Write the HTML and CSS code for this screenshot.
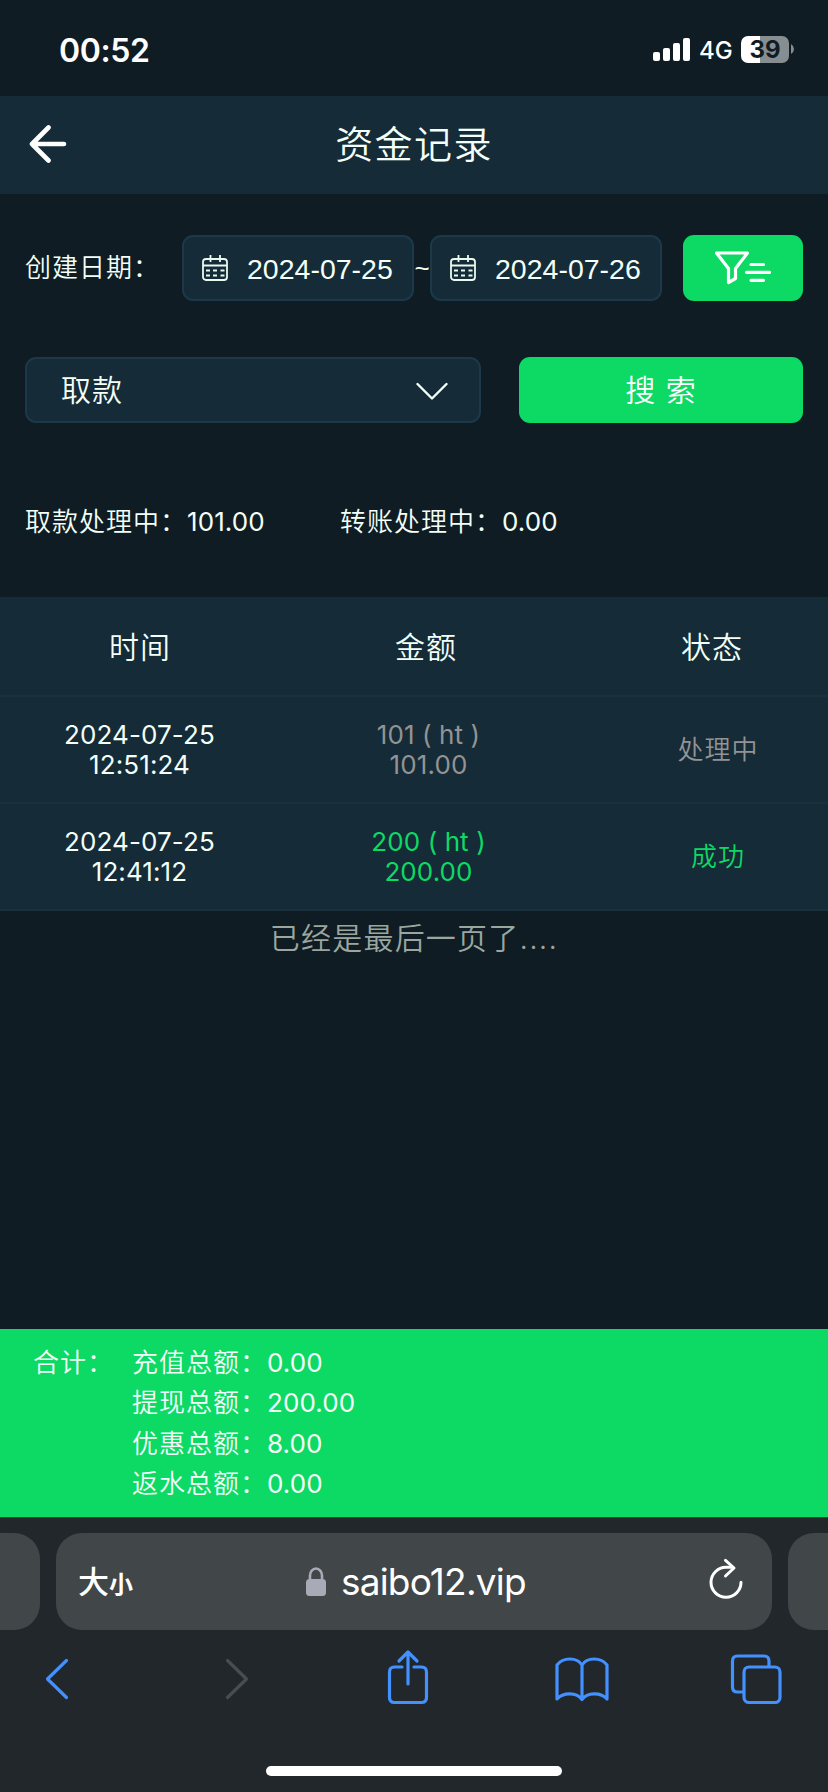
FILE: index.html
```html
<!DOCTYPE html>
<html lang="zh-CN">
<head>
<meta charset="utf-8">
<title>资金记录</title>
<link rel="stylesheet" href="styles.css">
</head>
<body>
<div class="phone">
  <header class="status">
    <span class="clock">00:52</span>
    <div class="status-icons">
      <svg class="signal" viewBox="0 0 37 23"><rect x="0" y="14" width="7" height="9" rx="2"/><rect x="10" y="10" width="7" height="13" rx="2"/><rect x="20" y="5" width="7" height="18" rx="2"/><rect x="30" y="0" width="7" height="23" rx="2"/></svg>
      <span class="network">4G</span>
      <span class="battery">39</span>
      <svg class="nub" viewBox="0 0 3 10"><path d="M0 0Q3 2 3 5T0 10Z"/></svg>
    </div>
  </header>

  <nav class="titlebar">
    <svg class="back" viewBox="0 0 38 38"><path d="M19.5 2.5 3 19 19.5 35.500M3 19H35"/></svg>
    <h1 class="title">资金记录</h1>
  </nav>

  <main class="content">
    <div class="filters">
      <span class="label">创建日期：</span>
      <div class="field date">
        <svg class="calendar" viewBox="0 0 26 26"><rect x="1" y="4" width="24" height="21" rx="3"/><path d="M1 10.500H25M8.500 0V7M18 0V7M4 15.500H8M11 15.500H15M18.500 15.500H22.500M4 20.500H8M11 20.500H15M18.500 20.500H22.500"/></svg>
        <span class="date-value">2024-07-25</span>
      </div>
      <span class="tilde">~</span>
      <div class="field date">
        <svg class="calendar" viewBox="0 0 26 26"><rect x="1" y="4" width="24" height="21" rx="3"/><path d="M1 10.500H25M8.500 0V7M18 0V7M4 15.500H8M11 15.500H15M18.500 15.500H22.500M4 20.500H8M11 20.500H15M18.500 20.500H22.500"/></svg>
        <span class="date-value">2024-07-26</span>
      </div>
      <button class="btn filter">
        <svg class="funnel" viewBox="0 0 56 34"><path d="M1.500 2H32.500L20.500 17.500V27.500L13.500 31.500V17.500Z"/><path d="M36 13.500H48.500M31.500 21.300H54.500M36 29.300H48.500"/></svg>
      </button>
    </div>

    <div class="search-row">
      <div class="field select"><span class="select-value">取款</span>
        <svg class="caret" viewBox="0 0 32 20"><path d="M1.500 2 16 16.500 30.500 2"/></svg>
      </div>
      <button class="btn search">搜 索</button>
    </div>

    <div class="pending">
      <span class="pending-item">取款处理中：<span class="num">101.00</span></span>
      <span class="pending-item">转账处理中：<span class="num">0.00</span></span>
    </div>

    <section class="table">
      <div class="thead"><span>时间</span><span>金额</span><span class="state">状态</span></div>
      <div class="row">
        <div class="num">2024-07-25<br>12:51:24</div>
        <div class="num muted">101 ( ht )<br>101.00</div>
        <div class="state muted">处理中</div>
      </div>
      <div class="row">
        <div class="num">2024-07-25<br>12:41:12</div>
        <div class="num success">200 ( ht )<br>200.00</div>
        <div class="state success">成功</div>
      </div>
    </section>
    <p class="end">已经是最后一页了....</p>
  </main>

  <section class="totals">
    <div class="totals-label">合计：</div>
    <div class="totals-list">
      <div>充值总额：<span class="num">0.00</span></div>
      <div>提现总额：<span class="num">200.00</span></div>
      <div>优惠总额：<span class="num">8.00</span></div>
      <div>返水总额：<span class="num">0.00</span></div>
    </div>
  </section>

  <footer class="browser">
    <div class="tabs">
      <div class="tab tab-prev"></div>
      <div class="tab tab-main">
        <span class="textsize">大<small>小</small></span>
        <div class="address">
          <svg class="lock" viewBox="0 0 20 29"><rect x="0" y="12" width="20" height="17" rx="3.500"/><path d="M4 14V8.500A6 7 0 0 1 16 8.500V14"/></svg>
          <span>saibo12.vip</span>
        </div>
        <svg class="reload" viewBox="0 0 36 42"><path d="M33 24.300A15 15 0 1 1 18 9.300H24"/><path d="M17.500 2.300 26 10 17.500 18"/></svg>
      </div>
      <div class="tab tab-next"></div>
    </div>
    <div class="toolbar">
      <svg class="tool nav-back" viewBox="0 0 26 44"><path d="M22.500 3.500 3.500 22 22.500 40.500"/></svg>
      <svg class="tool nav-forward" viewBox="0 0 26 44"><path d="M3.500 3.500 22.500 22 3.500 40.500"/></svg>
      <svg class="tool share" viewBox="0 0 44 56"><path d="M16 18H8.500Q3.500 18 3.500 23V48.500Q3.500 53.500 8.500 53.500H35.500Q40.500 53.500 40.500 48.500V23Q40.500 18 35.500 18H28"/><path d="M22 35V3M13 12 22 3 31 12"/></svg>
      <svg class="tool book" viewBox="0 0 54 46"><path d="M27 9C22 1 8 1 2 9V43C8 36 22 36 27 43.500C32 36 46 36 52 43V9C46 1 32 1 27 9V43"/></svg>
      <svg class="tool pages" viewBox="0 0 52 52"><path d="M13 39H7.500Q2.500 39 2.500 34V8Q2.500 3 7.500 3H34Q39 3 39 8V13"/><rect x="14" y="14" width="36" height="35.500" rx="5"/></svg>
    </div>
    <div class="home"></div>
  </footer>
</div>
</body>
</html>
```
FILE: styles.css
```css
* { box-sizing: border-box; }
body {
  margin: 0;
  background: #0f1c23;
  color: #f3fff8;
  font-family: Inter, "Noto Sans CJK SC", sans-serif;
  font-size: 26px;
  font-weight: 350;
}
svg { display: block; flex: none; fill: none; stroke-linecap: round; stroke-linejoin: round; }
.num { font-weight: 400; letter-spacing: .1px; }
.phone { width: 828px; height: 1792px; display: flex; flex-direction: column; overflow: hidden; }

.status { height: 96px; flex: none; padding: 2px 34px 0 59px; display: flex; align-items: center; justify-content: space-between; color: #fff; }
.clock { font-size: 32px; font-weight: 600; letter-spacing: -.4px; line-height: 40px; margin-top: 3px; }
.status-icons { display: flex; align-items: center; }
.signal { width: 37px; height: 23px; fill: #fff; margin-right: 9px; }
.network { font-size: 24px; font-weight: 450; width: 33px; margin-right: 9px; line-height: 30px; margin-top: 3px; }
.battery { width: 48px; height: 27px; border-radius: 7px; background: linear-gradient(90deg, #fff 19px, #878e91 19px); color: #0f1c23; font-size: 24px; font-weight: 700; line-height: 27px; text-align: center; }
.nub { width: 3px; height: 10px; fill: #878e91; margin-left: 2px; }

.titlebar { height: 98px; flex: none; background: #152b37; display: grid; grid-template-columns: 40px 1fr 40px; align-items: center; padding: 0 29px; }
.back { width: 38px; height: 38px; stroke: #fff; stroke-width: 4.600; margin-top: -2px; }
.title { margin: -3px 0 0; font-size: 38px; font-weight: 350; letter-spacing: 1.400px; text-align: center; line-height: 50px; }

.content { flex: 1; }
.filters { display: flex; align-items: center; height: 66px; margin: 41px 25px 0; }
.label { width: 157px; letter-spacing: 1px; white-space: nowrap; line-height: 36px; }
.field { height: 66px; background: #152b37; border: 2px solid #1c394a; border-radius: 11px; display: flex; align-items: center; }
.date { width: 232px; padding-left: 18px; gap: 19px; font: 400 28.500px/36px "Liberation Sans", sans-serif; }
.date-value { margin-top: 1px; }
.calendar { width: 26px; height: 26px; stroke: #eafaf0; stroke-width: 1.800; stroke-linecap: butt; }
.tilde { width: 16px; text-align: center; font: 400 26px/30px "Liberation Sans", sans-serif; }
.btn { border: 0; padding: 0; border-radius: 11px; background: #0dd965; color: #fff; height: 66px; font: 350 30px/66px Inter, "Noto Sans CJK SC", sans-serif; }
.filter { width: 120px; margin-left: 21px; display: flex; align-items: center; justify-content: center; }
.funnel { width: 56px; height: 34px; stroke: #fff; stroke-width: 3.200; margin-left: 0; }
.search-row { display: flex; justify-content: space-between; margin: 56px 25px 0; }
.select { width: 456px; justify-content: space-between; padding: 0 31px 0 34px; font-size: 30px; letter-spacing: 1px; }
.select-value { margin-top: -4px; }
.caret { width: 32px; height: 20px; stroke: #f3fff8; stroke-width: 2.400; margin-top: 4px; }
.search { width: 284px; letter-spacing: 1px; }
.pending { display: flex; height: 36px; line-height: 36px; margin: 81px 25px 57px; letter-spacing: 1px; }
.pending-item { width: 315px; white-space: nowrap; }

.table { background: #152b37; text-align: center; letter-spacing: 1px; }
.thead { display: grid; grid-template-columns: 280px 292px 256px; height: 100px; align-items: center; font-size: 30px; line-height: 40px; padding-top: 1px; border-bottom: 2px solid #18313e; }
.row { display: grid; grid-template-columns: 279px 299px 250px; height: 107px; align-items: center; line-height: 30px; border-bottom: 2px solid #18313e; }
.state { padding-left: 24px; }
.row .state { padding-left: 30px; }
.muted { color: #939393; }
.success { color: #0dd965; }
.end { margin: 7px 0 0; text-align: center; color: #9aa69f; font-size: 30px; line-height: 40px; letter-spacing: 1.200px; }

.totals { height: 188px; flex: none; background: #0dd965; display: flex; padding: 14px 0 0 33px; line-height: 40.400px; letter-spacing: 1px; color: #f3fff8; }
.totals-label { width: 99px; }

.browser { height: 275px; flex: none; background: #21272b; border-top: 1px solid #35403f; }
.tabs { display: grid; grid-template-columns: 40px 716px 40px; gap: 16px; margin-top: 15px; height: 97px; }
.tab { background: #414649; }
.tab-prev { border-radius: 0 26px 26px 0; }
.tab-main { border-radius: 26px; display: flex; align-items: center; padding: 0 28px 0 22px; color: #fff; }
.tab-next { border-radius: 26px 0 0 26px; }
.textsize { font-size: 31px; font-weight: 500; line-height: 40px; width: 228px; margin-top: 3px; }
.textsize small { font-size: 24px; font-weight: 700; }
.address { display: flex; align-items: center; gap: 15px; font-size: 37px; font-weight: 400; letter-spacing: -.8px; line-height: 44px; flex: 1; }
.lock { width: 20px; height: 29px; fill: #a8abb5; }
.lock path { fill: none; stroke: #a8abb5; stroke-width: 2.600; }
.reload { width: 36px; height: 42px; stroke: #fff; stroke-width: 3; margin-top: -6px; }
.toolbar { display: flex; align-items: flex-start; height: 62px; margin: 18px 44px 0; }
.tool { stroke: #4390ff; stroke-width: 3.200; }
.nav-back { width: 26px; height: 44px; margin-top: 9px; }
.nav-forward { width: 26px; height: 44px; margin: 9px 0 0 154px; stroke: #484d50; }
.share { width: 44px; height: 56px; margin: 1px 0 0 136px; }
.book { width: 54px; height: 46px; margin: 8px 0 0 125px; }
.pages { width: 52px; height: 52px; margin: 5px 0 0 121px; }
.home { width: 296px; height: 10px; border-radius: 5px; background: #fff; margin: 56px auto 0; }
```
